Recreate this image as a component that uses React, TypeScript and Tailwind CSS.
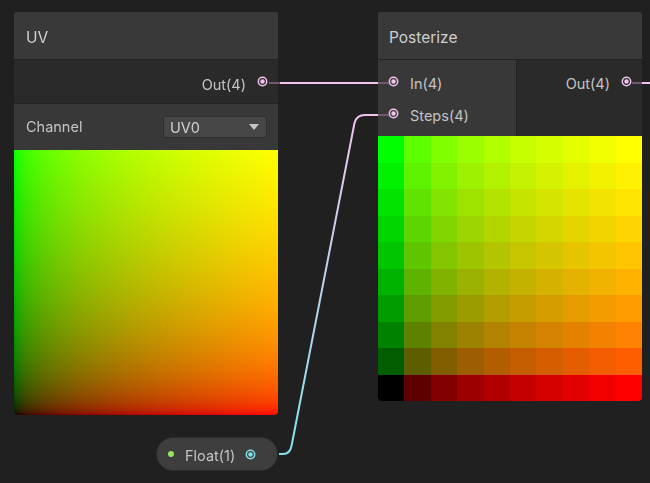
import React from 'react';

const toSrgb = (x: number) => {
  const v = x <= 0.0031308 ? 12.92 * x : 1.055 * Math.pow(x, 1 / 2.4) - 0.055;
  return Math.round(Math.max(0, Math.min(1, v)) * 255);
};

const PortRing = ({ color }: { color: string }) => (
  <svg width="11" height="11" viewBox="0 0 11 11" className="shrink-0">
    <circle cx="5.5" cy="5.5" r="4.2" fill="none" stroke={color} strokeWidth="1.5" />
    <circle cx="5.5" cy="5.5" r="2.2" fill={color} />
  </svg>
);

const UvPreview = () => (
  <div className="relative h-[265px] w-full overflow-hidden rounded-b-[4px] bg-[linear-gradient(in_srgb-linear_to_top,#000,#0f0)]">
    <div className="absolute inset-0 bg-[linear-gradient(in_srgb-linear_to_right,#000,#f00)] mix-blend-screen" />
  </div>
);

const PosterizePreview = () => {
  const cells = [];
  for (let r = 0; r < 10; r++) {
    for (let c = 0; c < 10; c++) {
      const red = toSrgb(c / 9);
      const green = toSrgb((9 - r) / 9);
      cells.push(
        <div key={`${r}-${c}`} style={{ backgroundColor: `rgb(${red},${green},0)` }} />
      );
    }
  }
  return (
    <div className="grid h-[265px] w-full grid-cols-10 grid-rows-10 overflow-hidden rounded-b-[4px]">
      {cells}
    </div>
  );
};

const UvNode = () => (
  <div className="absolute left-[14px] top-[12px] flex w-[264px] flex-col overflow-hidden rounded-[3px] bg-[#2a2a2a]">
    <div className="flex h-[48px] items-center border-b border-[#232323] bg-[#393939] px-[12px] pt-[4px] text-[15.5px] text-[#cfcfcf]">
      UV
    </div>
    <div className="flex h-[44px] items-center justify-end gap-[11px] border-b border-[#232323] bg-[#2a2a2a] pr-[10px] text-[14.5px] text-[#c4c4c4]">
      <span className="translate-y-[3px]">Out(4)</span>
      <PortRing color="#f2c2f0" />
    </div>
    <div className="flex h-[46px] items-center justify-between bg-[#383838] pl-[12px] pr-[11px] text-[14.5px] text-[#c4c4c4]">
      <span>Channel</span>
      <div className="flex h-[22px] w-[104px] items-center justify-between rounded-[3px] border border-[#303030] bg-[#464646] pl-[6px] pr-[7px] text-[#d0d0d0]">
        <span className="translate-y-[1px]">UV0</span>
        <svg width="10" height="6" viewBox="0 0 10 6">
          <path d="M0 0 L10 0 L5 6 Z" fill="#c4c4c4" />
        </svg>
      </div>
    </div>
    <UvPreview />
  </div>
);

const PosterizeNode = () => (
  <div className="absolute left-[378px] top-[12px] flex w-[264px] flex-col overflow-hidden rounded-[3px] bg-[#2a2a2a]">
    <div className="flex h-[48px] items-center border-b border-[#232323] bg-[#393939] pl-[11px] pt-[4px] text-[15.5px] text-[#cfcfcf]">
      Posterize
    </div>
    <div className="flex h-[76px] text-[14.5px] text-[#c4c4c4]">
      <div className="flex w-[139px] flex-col border-r border-[#232323] bg-[#383838] pt-[5px]">
        <div className="flex h-[32px] items-center gap-[11px] pl-[10px]">
          <PortRing color="#f2c2f0" />
          <span className="translate-y-[3px]">In(4)</span>
        </div>
        <div className="flex h-[32px] items-center gap-[11px] pl-[10px]">
          <PortRing color="#f2c2f0" />
          <span className="translate-y-[3px]">Steps(4)</span>
        </div>
      </div>
      <div className="flex flex-1 flex-col bg-[#2a2a2a] pt-[5px]">
        <div className="flex h-[32px] items-center justify-end gap-[11px] pr-[10px]">
          <span className="translate-y-[3px]">Out(4)</span>
          <PortRing color="#f2c2f0" />
        </div>
      </div>
    </div>
    <PosterizePreview />
  </div>
);

const FloatNode = () => (
  <div className="absolute left-[156px] top-[437px] flex h-[34px] w-[122px] items-center rounded-[17px] border border-[#2c2c2c] bg-[#3e3e3e] pl-[11px] text-[14.5px] text-[#c4c4c4]">
    <span className="h-[6px] w-[6px] rounded-full bg-[#9be35f]" />
    <span className="ml-[11px] translate-y-[2px]">Float(1)</span>
    <span className="ml-[10px]">
      <PortRing color="#84e3e8" />
    </span>
  </div>
);

const Wires = () => (
  <svg className="pointer-events-none absolute inset-0" width="650" height="483">
    <defs>
      <linearGradient id="stepsWire" gradientUnits="userSpaceOnUse" x1="0" y1="454" x2="0" y2="114">
        <stop offset="0" stopColor="#84e3e8" />
        <stop offset="1" stopColor="#f2c2f0" />
      </linearGradient>
    </defs>
    <path d="M279 83 L378 83" stroke="#f2c2f0" strokeWidth="2" fill="none" />
    <path d="M269 83 L280 83" stroke="#6d5b6b" strokeWidth="2" fill="none" />
    <path d="M378 83 L389 83" stroke="#6d5b6b" strokeWidth="2" fill="none" />
    <path d="M378 115 L389 115" stroke="#6d5b6b" strokeWidth="2" fill="none" />
    <path d="M632 83 L642 83" stroke="#6d5b6b" strokeWidth="2" fill="none" />
    <path d="M642 83 L650 83" stroke="#f2c2f0" strokeWidth="2" fill="none" />
    <path
      d="M279 454 L283 454 Q290 454 291.5 446 L354.5 123 Q356.5 115 365 115 L378 115"
      stroke="url(#stepsWire)"
      strokeWidth="2"
      fill="none"
    />
  </svg>
);

export default function App() {
  return (
    <div className="relative h-[483px] w-[650px] overflow-hidden bg-[#202020] font-['Inter',sans-serif]">
      <UvNode />
      <PosterizeNode />
      <FloatNode />
      <Wires />
    </div>
  );
}
